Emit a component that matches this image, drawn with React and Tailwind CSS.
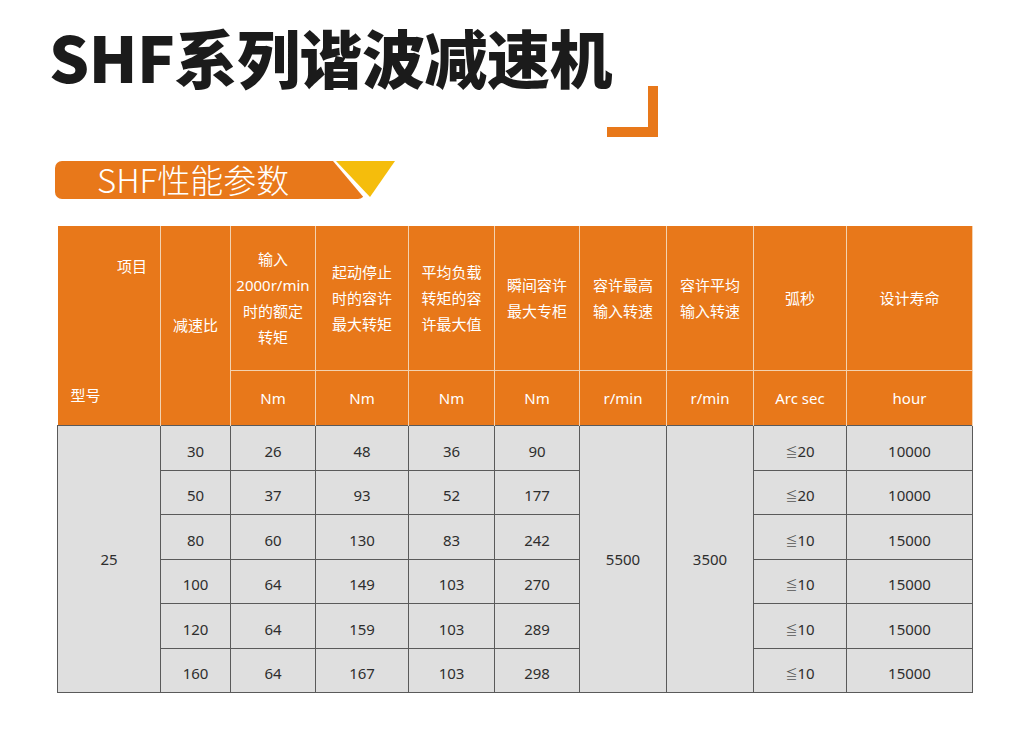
import React from 'react'

const heads = [
  ['输入', '2000r/min', '时的额定', '转矩'],
  ['起动停止', '时的容许', '最大转矩'],
  ['平均负载', '转矩的容', '许最大值'],
  ['瞬间容许', '最大专柜'],
  ['容许最高', '输入转速'],
  ['容许平均', '输入转速'],
  ['弧秒'],
  ['设计寿命'],
]

const units = ['Nm', 'Nm', 'Nm', 'Nm', 'r/min', 'r/min', 'Arc sec', 'hour']

const rows = [
  ['30', '26', '48', '36', '90', '20', '10000'],
  ['50', '37', '93', '52', '177', '20', '10000'],
  ['80', '60', '130', '83', '242', '10', '15000'],
  ['100', '64', '149', '103', '270', '10', '15000'],
  ['120', '64', '159', '103', '289', '10', '15000'],
  ['160', '64', '167', '103', '298', '10', '15000'],
]

const widths = [103, 70, 85, 93, 86, 85, 87, 87, 93, 126]

const App = () => {
  const font = { fontFamily: '"Noto Sans", "Noto Sans CJK SC", sans-serif' }
  return (
    <div className="w-[1026px] h-[729px] bg-white overflow-hidden" style={font}>
      <h1 className="ml-[49px] pt-[24px] text-[63px] leading-none font-black text-[#1b1b1b] tracking-[-0.5px] [font-family:'Noto_Sans_CJK_SC',sans-serif]">
        SHF系列谐波减速机
      </h1>
      <div className="ml-[607px] mt-[-1px] w-[51px] h-[51px] border-r-[10px] border-b-[10px] border-[#e8781a]"></div>

      <div className="flex items-start ml-[55px] mt-[24px]">
        <div className="w-[310px] h-[38px] rounded-[7px] bg-[#e8781a] pl-[42px] text-white text-[33px] leading-[37px] [clip-path:polygon(0_0,278px_0,310px_100%,0_100%)] [font-family:'Noto_Sans_CJK_SC',sans-serif] font-light">
          SHF性能参数
        </div>
        <svg width="59" height="38" viewBox="0 0 59 38" className="ml-[-29px]">
          <polygon points="0,0 59,0 34,36" fill="#f5bd0c" />
        </svg>
      </div>

      <table className="ml-[57px] mt-[27px] table-fixed border-collapse text-center" style={{ width: 915 }}>
        <colgroup>
          {widths.map((w, i) => (
            <col key={i} style={{ width: w }} />
          ))}
        </colgroup>
        <thead className="bg-[#e8781a] text-white text-[15px]">
          <tr className="h-[144px]">
            <th rowSpan={2} className="p-0 font-normal border-r border-[#f3d2b0] align-top">
              <div className="h-[199px] flex flex-col justify-between pt-[29px] pb-[19px]">
                <span className="self-end pr-[13px]">项目</span>
                <span className="self-start pl-[13px]">型号</span>
              </div>
            </th>
            <th rowSpan={2} className="p-0 font-normal border-r border-[#f3d2b0]">减速比</th>
            {heads.map((h, i) => (
              <th key={i} className="p-0 font-normal leading-[26px] border-r border-b border-[#f3d2b0]">
                {h.map((l, j) => (
                  <div key={j}>{l}</div>
                ))}
              </th>
            ))}
          </tr>
          <tr className="h-[55px]">
            {units.map((u, i) => (
              <th key={i} className="p-0 font-normal border-r border-[#f3d2b0]">{u}</th>
            ))}
          </tr>
        </thead>
        <tbody className="bg-[#dfdfdf] text-[#2e2e2e] text-[15px]">
          {rows.map((r, i) => (
            <tr key={i} className="h-[44.5px]">
              {i === 0 && (
                <td rowSpan={6} className="border border-[#5a5a5a] p-0">25</td>
              )}
              {r.slice(0, 5).map((c, j) => (
                <td key={j} className="border border-[#5a5a5a] p-0 pt-[6px]">{c}</td>
              ))}
              {i === 0 && (
                <>
                  <td rowSpan={6} className="border border-[#5a5a5a] p-0">5500</td>
                  <td rowSpan={6} className="border border-[#5a5a5a] p-0">3500</td>
                </>
              )}
              <td className="border border-[#5a5a5a] p-0 pt-[6px]">
                <span className="text-[12px] text-[#555]">≦</span>{r[5]}
              </td>
              <td className="border border-[#5a5a5a] p-0 pt-[6px]">{r[6]}</td>
            </tr>
          ))}
        </tbody>
      </table>
    </div>
  )
}

export default App
